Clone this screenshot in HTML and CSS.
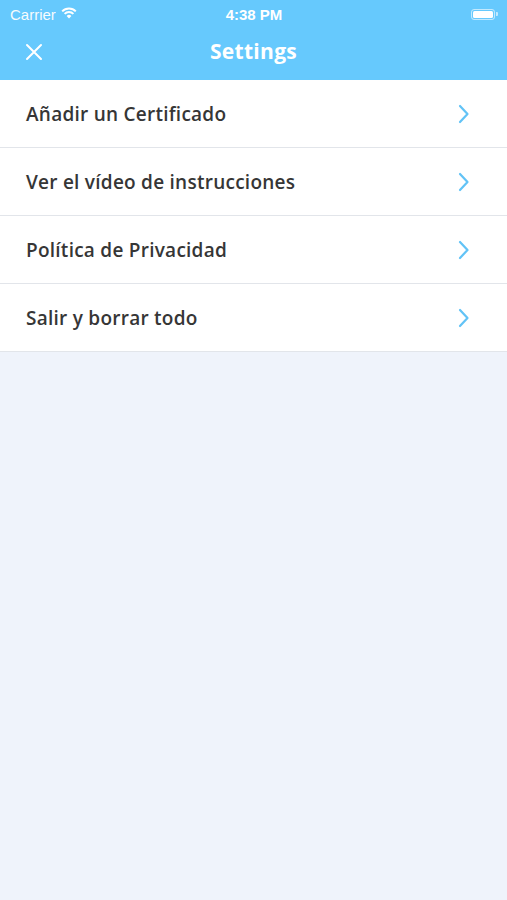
FILE: index.html
```html
<!DOCTYPE html>
<html lang="es">
<head>
<meta charset="utf-8">
<title>Settings</title>
<link rel="stylesheet" href="styles.css">
</head>
<body>
<div class="app">
  <header class="top">
    <div class="status">
      <div class="status-left">
        <span class="carrier">Carrier</span>
        <svg class="wifi" width="16" height="12" viewBox="0 0 16 12"><path d="M8 11.5 L5.6 8.9 A3.4 3.4 0 0 1 10.4 8.9 Z" fill="#fff"/><path d="M3.6 6.9 A6.2 6.2 0 0 1 12.4 6.9" stroke="#fff" stroke-width="2" fill="none"/><path d="M1.2 4.4 A9.6 9.6 0 0 1 14.8 4.4" stroke="#fff" stroke-width="2" fill="none"/></svg>
      </div>
      <span class="time">4:38 PM</span>
      <div class="status-right">
        <span class="battery"><span class="battery-fill"></span></span><span class="battery-tip"></span>
      </div>
    </div>
    <nav class="navbar">
      <svg class="close" width="18" height="18" viewBox="0 0 18 18"><path d="M2 2 L16 16 M16 2 L2 16" stroke="#fff" stroke-width="2" stroke-linecap="round"/></svg>
      <h1 class="title">Settings</h1>
    </nav>
  </header>
  <ul class="list">
    <li class="row"><span class="label">Añadir un Certificado</span><svg class="chev" width="12" height="20" viewBox="0 0 12 20"><path d="M2 2 L9.5 10 L2 18" stroke="#62c3f6" stroke-width="2.2" fill="none" stroke-linecap="round" stroke-linejoin="round"/></svg></li>
    <li class="row"><span class="label">Ver el vídeo de instrucciones</span><svg class="chev" width="12" height="20" viewBox="0 0 12 20"><path d="M2 2 L9.5 10 L2 18" stroke="#62c3f6" stroke-width="2.2" fill="none" stroke-linecap="round" stroke-linejoin="round"/></svg></li>
    <li class="row"><span class="label">Política de Privacidad</span><svg class="chev" width="12" height="20" viewBox="0 0 12 20"><path d="M2 2 L9.5 10 L2 18" stroke="#62c3f6" stroke-width="2.2" fill="none" stroke-linecap="round" stroke-linejoin="round"/></svg></li>
    <li class="row"><span class="label">Salir y borrar todo</span><svg class="chev" width="12" height="20" viewBox="0 0 12 20"><path d="M2 2 L9.5 10 L2 18" stroke="#62c3f6" stroke-width="2.2" fill="none" stroke-linecap="round" stroke-linejoin="round"/></svg></li>
  </ul>
</div>
</body>
</html>
```
FILE: styles.css
```css
* { box-sizing: border-box; }
html, body { margin: 0; padding: 0; }
body {
  background: #eff3fb;
  font-family: "Open Sans", "Noto Sans", sans-serif;
  width: 507px;
  height: 900px;
}
.app { display: flex; flex-direction: column; }
.top { background: #66c9fd; color: #fff; height: 80px; }
.status {
  height: 28px;
  display: grid;
  grid-template-columns: 1fr auto 1fr;
  align-items: center;
  padding: 0 9px 0 10px;
}
.status-left { display: flex; align-items: center; gap: 5px; }
.carrier { font-family: "Liberation Sans", Arial, sans-serif; font-size: 15px; opacity: 0.95; }
.wifi { margin-top: -2px; }
.time { font-family: "Liberation Sans", Arial, sans-serif; font-size: 15px; font-weight: 600; text-align: center; }
.status-right { display: flex; justify-content: flex-end; align-items: center; }
.battery {
  width: 24px; height: 11px; border-radius: 3px;
  border: 1px solid rgba(255,255,255,0.6);
  padding: 1px; display: flex;
}
.battery-fill { flex: 1; background: #fff; border-radius: 1.5px; }
.battery-tip { width: 2px; height: 4px; background: rgba(255,255,255,0.6); border-radius: 0 1px 1px 0; margin-left: 1px; }
.navbar {
  height: 52px;
  display: flex;
  align-items: center;
  justify-content: center;
  position: relative;
}
.close { position: absolute; left: 25px; top: 15px; }
.title {
  margin: 0;
  font-size: 21px;
  font-weight: 700;
  letter-spacing: 0.3px;
  margin-top: -6px;
}
.list { list-style: none; margin: 0; padding: 0; background: #fff; }
.row {
  height: 68px;
  border-bottom: 1px solid #e2e5ea;
  display: flex;
  align-items: center;
  justify-content: space-between;
  padding: 0 37px 0 26px;
}
.label { font-size: 19px; font-weight: 600; color: #363636; letter-spacing: 0.25px; }
.chev { flex: none; }
```
